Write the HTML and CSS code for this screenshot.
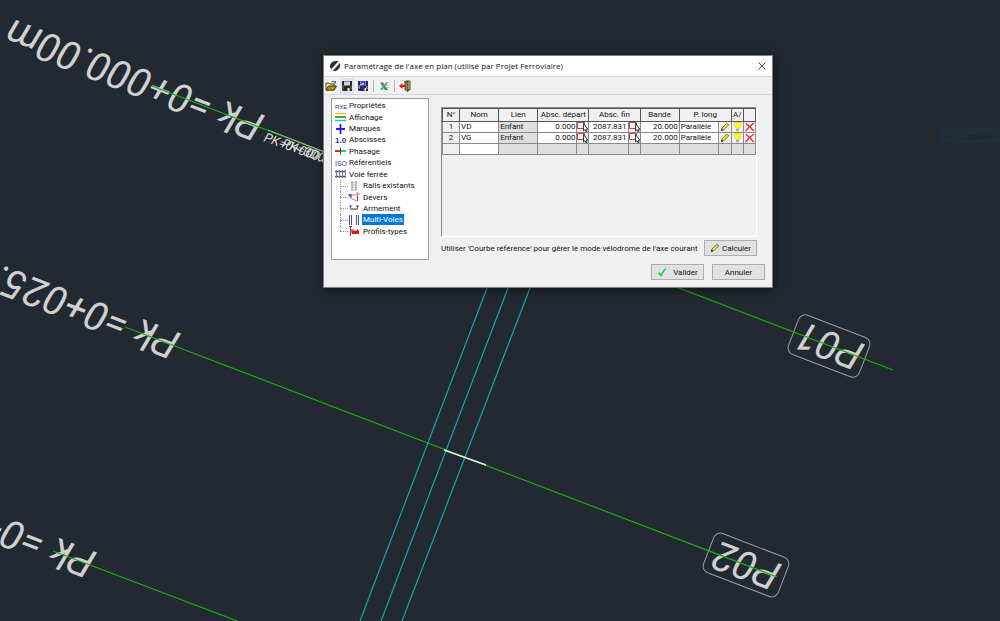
FILE: index.html
```html
<!DOCTYPE html>
<html lang="fr">
<head>
<meta charset="utf-8">
<title>Paramétrage de l'axe en plan</title>
<link rel="stylesheet" href="styles.css">
</head>
<body>
<svg class="defs" aria-hidden="true">
  <symbol id="i-pick" viewBox="0 0 11 10"><path d="M.5.500h7v6h-7z" fill="#fbeeee" stroke="#b04848"/><path d="M6.500 1.500v7.500l1.500-1.300.9 2 1.200-.5-.9-2h1.600z" fill="#fff" stroke="#222" stroke-width=".9"/></symbol>
  <symbol id="i-pencil" viewBox="0 0 12 12"><path d="M1.500 10.500l.8-3.200L8 1.500l2.500 1.700-5.800 6z" fill="#e8e23c" stroke="#55551c" stroke-width=".9"/><path d="M1.200 10.800l.8-3 2 1.700z" fill="#222270"/></symbol>
  <symbol id="i-bulb" viewBox="0 0 10 11"><path d="M2 .5h6l1 2-2 4.500H3.500L1 2.500z" fill="#ffff10" stroke="#d2c83a" stroke-width=".7"/><path d="M3.500 7.500h3v2.800h-3z" fill="#aaa"/></symbol>
  <symbol id="i-cross" viewBox="0 0 12 12"><path d="M1.500 1.500q5 3.500 9.500 9.500M11 1.500Q5 5.500 1 11" fill="none" stroke="#e8202c" stroke-width="1.600"/></symbol>
</svg>

<main class="workspace">
  <svg class="drawing" viewBox="0 0 1000 621" preserveAspectRatio="xMinYMin slice">
    <g class="labels">
      <text transform="translate(266 116) rotate(201)">Pk =0+000.00m</text>
      <text transform="translate(182 334) rotate(201)">Pk =0+025.00m</text>
      <text transform="translate(98 553) rotate(201)">Pk =0+050.00m</text>
      <text transform="translate(866 345) rotate(201)">P01</text>
      <text transform="translate(783 565) rotate(201)">P02</text>
    </g>
    <g class="frames">
      <rect x="-38" y="-21" width="76" height="42" rx="7" transform="translate(829 346) rotate(21)"/>
      <rect x="-40" y="-21" width="80" height="42" rx="7" transform="translate(746 565) rotate(21)"/>
    </g>
    <g class="station">
      <text transform="translate(263 141) rotate(20)">PK=0+000.00</text>
      <text transform="translate(281 147) rotate(20)">PK=3D0.00</text>
    </g>
    <path class="axis" d="M152 86L893 370M125 327L777 577M53 551L240 622"/>
    <path class="axis-pale" d="M268 130L330 154"/>
    <path class="rails" d="M487 288L360 621M508 288L381 621M530 288L402 621"/>
    <path class="picked" d="M444 450L486 465"/>
    <g class="ghost">
      <rect x="938" y="128" width="62" height="15" fill="#222d37"/>
      <rect x="938" y="128" width="16" height="15" fill="#202d39"/>
      <circle cx="946" cy="136" r="2" fill="#1c2833"/>
      <text x="962" y="139">Capture re</text>
    </g>
  </svg>

  <section class="dialog" role="dialog" aria-labelledby="dlg-title">
    <header class="titlebar">
      <svg class="logo" viewBox="0 0 12 12"><path d="M1 7.500A5.500 5.500 0 0 1 6.500 1L9.500 1 2.500 9z" fill="#26303c"/><path d="M10.800 3q1.700 5.500-4.300 8L3.500 11z" fill="#26303c"/><path d="M4 11l7-8" stroke="#7b8a9a" stroke-width=".9"/></svg>
      <h1 id="dlg-title">Paramétrage de l'axe en plan (utilisé par Projet Ferroviaire)</h1>
      <button class="close" aria-label="Fermer"><svg viewBox="0 0 8 8"><path d="M.5.500l7 7M7.500.500l-7 7" stroke="#333" stroke-width=".9"/></svg></button>
    </header>

    <div class="toolbar" role="toolbar">
      <button aria-label="Ouvrir"><svg viewBox="0 0 12 12"><path d="M1 10V3h3l1 1h4v2" fill="#f4ee70" stroke="#333" stroke-width=".9"/><path d="M1 10.200L3.500 6H11.500L9 10.200z" fill="#a59f1d" stroke="#222" stroke-width=".9"/><path d="M6.500 2q2-1.800 3.500.5M10.500 1v2h-2" fill="none" stroke="#333" stroke-width=".8"/></svg></button>
      <button class="hot" aria-label="Enregistrer"><svg viewBox="0 0 12 12"><path d="M1 1h10v10H2l-1-1z" fill="#25252a"/><path d="M3 1.500h6v4H3z" fill="#c9d7d7"/><path d="M1.500 5.500h1v4h-1zM9.500 5.500h1v4h-1z" fill="#8a842a"/><path d="M6.500 8h2v3h-2z" fill="#eee"/></svg></button>
      <button aria-label="Enregistrer sous"><svg viewBox="0 0 12 12"><path d="M1 1h10v10H2l-1-1z" fill="#28285f"/><path d="M3 1.500h6v4H3z" fill="#b8c4e8"/><path d="M1.500 5.500h1.500v3H1.500zM9 6h1.500v3H9z" fill="#aaa03a"/><path d="M4 4q0-2 2-2t2 1.700q0 1.200-2 2.300v1.500M6 8.800v1.500" fill="none" stroke="#2438e0" stroke-width="1.400"/><path d="M7.500 8h1.500v3H7.500z" fill="#eee"/></svg></button>
      <span class="sep"></span>
      <button aria-label="Excel"><svg viewBox="0 0 12 12"><path d="M2 2.500h3l5 7.500H7z" fill="#3d8a50"/><path d="M10.500 2L8 2.500 1.800 9.500 4.500 10z" fill="#5ea46c"/><path d="M7 5.500h3.500M7.500 7.500h3" stroke="#8fbd98" stroke-width=".8"/></svg></button>
      <span class="sep"></span>
      <button aria-label="Quitter"><svg viewBox="0 0 12 12"><path d="M5 2l2-1h4v9H8.500" fill="#d8d29a" stroke="#333" stroke-width=".9"/><path d="M6 2.500L9 1.500v10L6 9.500z" fill="#98922c" stroke="#222" stroke-width=".8"/><path d="M0 6l3.500-3v2H6.500v2h-3v2z" fill="#f01818"/></svg></button>
    </div>

    <div class="content">
      <ul class="tree" role="tree">
        <li role="treeitem"><svg viewBox="0 0 12 10"><text class="glyph small" x="0" y="8">RXE</text></svg><span>Propriétés</span></li>
        <li role="treeitem"><svg viewBox="0 0 12 10"><path d="M0 1.500h11" stroke="#f0c020" stroke-width="1.500"/><path d="M0 5h11" stroke="#108018" stroke-width="1.500"/><path d="M0 8.500h11" stroke="#30c0c8" stroke-width="1.500"/></svg><span>Affichage</span></li>
        <li role="treeitem"><svg viewBox="0 0 12 10"><path d="M1 5h9M5.500 0v10" stroke="#2020e8" stroke-width="1.800"/></svg><span>Marques</span></li>
        <li role="treeitem"><svg viewBox="0 0 12 10"><text class="glyph bold" x="0" y="8">1.0</text></svg><span>Abscisses</span></li>
        <li role="treeitem"><svg viewBox="0 0 12 10"><path d="M0 5h5.500" stroke="#f01818" stroke-width="2"/><path d="M5.500 5h5.500" stroke="#18e030" stroke-width="2"/><path d="M5.500 1.500v7" stroke="#444"/></svg><span>Phasage</span></li>
        <li role="treeitem"><svg viewBox="0 0 12 10"><text class="glyph" x="0" y="8">ISO</text></svg><span>Référentiels</span></li>
        <li role="treeitem"><svg viewBox="0 0 12 10"><path d="M0 2.500h11M0 7.500h11" stroke="#4a4a84" stroke-width="1.300"/><path d="M1.500 1v8M4.500 1v8M7.500 1v8M10.500 1v8" stroke="#8080a8"/></svg><span>Voie ferrée</span></li>
        <li class="child" role="treeitem"><svg viewBox="0 0 12 10"><path d="M3 0v10M7 0v10" stroke="#777" stroke-width=".9"/><path d="M3 1.500h4M3 4h4M3 6.500h4M3 9h4" stroke="#aaa" stroke-width=".8"/></svg><span>Rails existants</span></li>
        <li class="child" role="treeitem"><svg viewBox="0 0 12 10"><path d="M0 3l2-.5v2.500zM8.500 4v5" stroke="#5555aa" fill="none" stroke-width="1.300"/><path d="M1 6l7 3" stroke="#999"/><path d="M2 3h5.500M8.500 0v4M7 2h4" stroke="#f06080" stroke-width=".9"/></svg><span>Dévers</span></li>
        <li class="child" role="treeitem"><svg viewBox="0 0 12 10"><path d="M1.500 2.500v3M0 3h3M8.500 2.500v3M7 3h3" stroke="#5555aa"/><path d="M1 6h8" stroke="#777" stroke-width="1.500"/></svg><span>Armement</span></li>
        <li class="child selected" role="treeitem" aria-selected="true"><svg viewBox="0 0 12 10"><path d="M.5 0v10M2.500 0v10M7.500 0v10M9.500 0v10" stroke="#5555a0" stroke-width="1.100"/></svg><span>Multi-Voies</span></li>
        <li class="child last" role="treeitem"><svg viewBox="0 0 12 10"><path d="M1.500 0v10M0 .5h3" stroke="#704040"/><path d="M2 4.500h8v3.500H3z" fill="#e01818"/><path d="M8.500 3v2M2 4h3" stroke="#5555aa"/></svg><span>Profils-types</span></li>
      </ul>

      <div class="panel">
        <div class="grid-frame">
          <table>
            <colgroup><col class="w17"><col class="w39"><col class="w39"><col class="w39"><col class="w12"><col class="w39"><col class="w12"><col class="w39"><col class="w39"><col class="w13"><col class="w12"><col class="w12"></colgroup>
            <thead>
              <tr><th>N°</th><th>Nom</th><th>Lien</th><th colspan="2">Absc. départ</th><th colspan="2">Absc. fin</th><th>Bande</th><th colspan="2">P. long</th><th>A/</th><th></th></tr>
            </thead>
            <tbody>
              <tr><td class="num">1</td><td>VD</td><td class="off">Enfant</td><td class="r">0.000</td><td class="ic"><button aria-label="Pointer"><svg><use href="#i-pick"/></svg></button></td><td class="r">2087.831</td><td class="ic"><button aria-label="Pointer"><svg><use href="#i-pick"/></svg></button></td><td class="r">20.000</td><td>Parallèle</td><td class="ic"><button aria-label="Modifier"><svg><use href="#i-pencil"/></svg></button></td><td class="ic"><button aria-label="Afficher"><svg><use href="#i-bulb"/></svg></button></td><td class="ic"><button aria-label="Supprimer"><svg><use href="#i-cross"/></svg></button></td></tr>
              <tr><td class="num">2</td><td>VG</td><td class="off">Enfant</td><td class="r">0.000</td><td class="ic"><button aria-label="Pointer"><svg><use href="#i-pick"/></svg></button></td><td class="r">2087.831</td><td class="ic"><button aria-label="Pointer"><svg><use href="#i-pick"/></svg></button></td><td class="r">20.000</td><td>Parallèle</td><td class="ic"><button aria-label="Modifier"><svg><use href="#i-pencil"/></svg></button></td><td class="ic"><button aria-label="Afficher"><svg><use href="#i-bulb"/></svg></button></td><td class="ic"><button aria-label="Supprimer"><svg><use href="#i-cross"/></svg></button></td></tr>
              <tr><td class="num"></td><td></td><td class="off"></td><td class="off"></td><td class="off"></td><td class="off"></td><td class="off"></td><td class="off"></td><td class="off"></td><td class="off"></td><td class="off"></td><td class="off"></td></tr>
            </tbody>
          </table>
        </div>
        <div class="hint">
          <p>Utiliser 'Courbe référence' pour gérer le mode vélodrome de l'axe courant</p>
          <button class="btn"><svg viewBox="0 0 12 12"><use href="#i-pencil"/></svg>Calculer</button>
        </div>
      </div>
    </div>

    <footer class="actions">
      <button class="btn"><svg class="tick" viewBox="0 0 12 12"><path d="M1 7.500L3.500 6.500 5 8.500Q7 4 10.500 1L11 2Q7.500 6 5.500 11.500H4.500Q3 9 1 7.500z" fill="#10d820"/></svg>Valider</button>
      <button class="btn">Annuler</button>
    </footer>
  </section>
</main>
</body>
</html>
```
FILE: styles.css
```css
* { box-sizing: border-box; }
body { margin: 0; background: #222930; font: 8px/11px Roboto, "Liberation Sans", sans-serif; color: #111; }
button { font: inherit; color: inherit; margin: 0; padding: 0; border: 0; background: none; }
svg { display: block; }
.defs { position: absolute; width: 0; height: 0; }

.workspace { position: relative; min-height: 100vh; overflow: hidden; }
.drawing { position: absolute; inset: 0; width: 100%; height: 100%; }
.labels { font: italic 40px Roboto, sans-serif; fill: #d0d0d0; }
.frames { fill: none; stroke: #9a9da1; stroke-width: 1; }
.station { font: italic 13px Roboto, sans-serif; fill: #dedede; }
.axis { fill: none; stroke: #20a81c; stroke-width: 1.2; }
.axis-pale { stroke: #9dbb9d; stroke-width: 1; }
.rails { fill: none; stroke: #16a5a8; stroke-width: 1.2; }
.picked { stroke: #e4eee4; stroke-width: 1.4; }
.ghost { font: 8px "Open Sans", sans-serif; fill: #1b242d; }

.dialog { position: absolute; left: 323px; top: 55px; width: 450px; background: #f0f0f0; border: 1px solid #7d8185; box-shadow: 1px 2px 8px #0008; }
.titlebar { display: flex; align-items: center; height: 20px; padding: 0 6px 0 5px; gap: 3px; background: #fff; }
.titlebar h1 { flex: 1; margin: 0; font: 400 8px/12px "Open Sans", "Noto Sans", sans-serif; white-space: nowrap; }
.logo { width: 12px; height: 12px; }
.close svg { width: 8px; height: 8px; }

.toolbar { display: flex; align-items: center; height: 19px; gap: 2px; border: solid #d9d9d9; border-width: 1px 0; }
.toolbar button { display: grid; place-items: center; width: 14px; height: 16px; }
.toolbar svg { width: 12px; height: 12px; }
.toolbar .hot { background: #d5e6f5; }
.sep { width: 1px; height: 12px; margin: 0 1px; background: #b4b4b4; }

.content { display: flex; gap: 12px; padding: 3px 15px 0 7px; }
.tree { display: grid; grid-template-rows: repeat(12, 1fr); align-self: start; width: 98px; height: 162px; margin: 0; padding: 1px 3px 22px; list-style: none; background: #fff; border: 1px solid #9a9ea4; }
.tree li { display: flex; align-items: center; gap: 1px; min-height: 0; white-space: nowrap; }
.tree svg { width: 12px; height: 10px; flex: none; overflow: visible; }
.tree span { padding: 0 1px; line-height: 11px; }
.glyph { font: 7px "Liberation Sans", sans-serif; fill: #333388; }
.glyph.small { font-size: 6px; }
.glyph.bold { font-size: 8px; font-weight: 700; }
.tree .child { position: relative; padding-left: 14px; }
.tree .child::before { content: ""; position: absolute; left: 5px; top: 0; bottom: 0; border-left: 1px dotted #999; }
.tree .child::after { content: ""; position: absolute; left: 5px; top: 50%; width: 8px; border-top: 1px dotted #999; }
.tree .last::before { bottom: 50%; }
.tree .selected span { background: #0078d7; color: #fff; }

.panel { flex: 1; min-width: 0; padding-top: 9px; }
.grid-frame { height: 130px; border: 1px solid; border-color: #8c8c8c #fff #fff #8c8c8c; }
table { width: 100%; table-layout: fixed; border-collapse: collapse; line-height: 10px; }
th, td { height: 11px; padding: 0 1px; border: 1px solid #8a8a8a; font-weight: 400; white-space: nowrap; overflow: hidden; }
th { height: 13px; background: #f0f0f0; border-color: #555; }
td { background: #fff; }
td.num { background: #f0f0f0; text-align: center; }
td.off { background: #dfdfdf; }
td.r { text-align: right; }
td.ic { padding: 0; background: #f0f0f0; }
td.ic button { display: block; width: 100%; height: 10px; }
td.ic svg { width: 100%; height: 10px; }
.w17 { width: 17px; }
.w39 { width: 39px; }
.w12 { width: 12px; }
.w13 { width: 13px; }

.hint { display: flex; align-items: center; justify-content: space-between; padding-top: 3px; }
.hint p { margin: 0; white-space: nowrap; }
.btn { display: flex; flex: none; align-items: center; justify-content: center; gap: 2px; width: 53px; height: 16px; background: #e1e1e1; border: 1px solid #adadad; }
.btn svg { width: 10px; height: 10px; }
.btn .tick { margin-right: 4px; }
.actions { display: flex; justify-content: flex-end; gap: 8px; padding: 8px 7px 7px; }
.content + .actions { padding-top: 4px; }
```
